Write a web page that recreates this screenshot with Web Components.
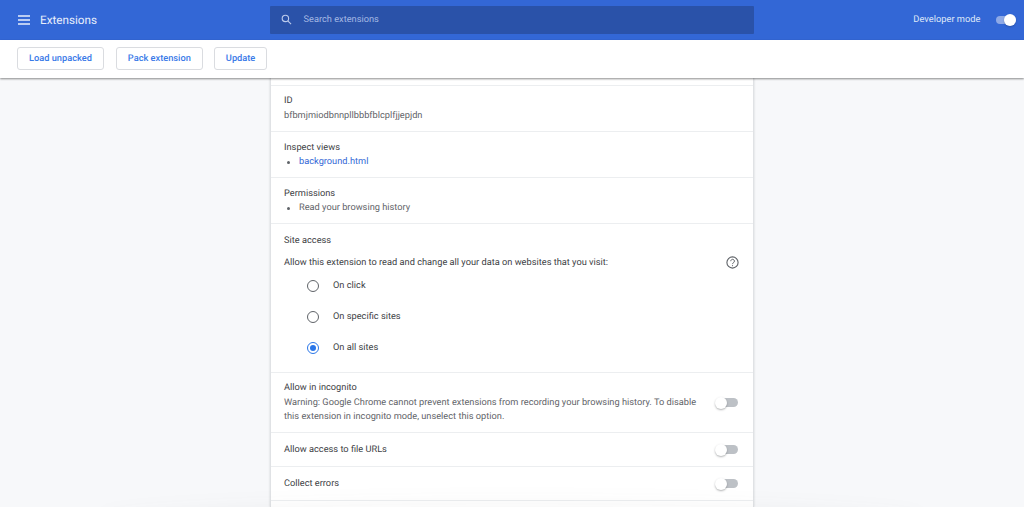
<!DOCTYPE html>
<html>
<head>
<meta charset="utf-8">
<title>Extensions</title>
<style>
  html, body { margin: 0; height: 507px; overflow: hidden; }
  body { background: #f7f8fa; font: 9.24px Roboto, sans-serif; text-rendering: geometricPrecision; color: #3c4043; display: flex; flex-direction: column; }
  /* faint shadow of the bottom edge, lies over the card */
  body::after { content: ""; position: fixed; left: 100px; right: 100px; bottom: -30px; height: 38px; border-radius: 50%; background: rgba(60,64,67,.03); filter: blur(8px); pointer-events: none; }
</style>
</head>
<body>
<ext-header></ext-header>
<ext-toolbar>
  <ext-button>Load unpacked</ext-button>
  <ext-button>Pack extension</ext-button>
  <ext-button>Update</ext-button>
</ext-toolbar>
<ext-card>
  <ext-row label="ID"><span class="muted">bfbmjmiodbnnpllbbbfblcplfjjepjdn</span></ext-row>
  <ext-row label="Inspect views"><ext-bullet><a>background.html</a></ext-bullet></ext-row>
  <ext-row label="Permissions"><ext-bullet>Read your browsing history</ext-bullet></ext-row>
  <ext-site-access></ext-site-access>
  <ext-toggle-row label="Allow in incognito" tall>Warning: Google Chrome cannot prevent extensions from recording your browsing history. To disable this extension in incognito mode, unselect this option.</ext-toggle-row>
  <ext-toggle-row label="Allow access to file URLs"></ext-toggle-row>
  <ext-toggle-row label="Collect errors"></ext-toggle-row>
</ext-card>

<script>
class ExtToggle extends HTMLElement {
  constructor() {
    super();
    this.attachShadow({ mode: "open" }).innerHTML = `
      <style>
        :host { display: block; position: relative; width: 22.5px; height: 12px; flex: none; }
        .bar { position: absolute; left: 2px; right: 0; top: 1.8px; height: 8.4px; border-radius: 5px; background: #bdc1c6; }
        .knob { position: absolute; left: 0; top: 0; width: 12px; height: 12px; border-radius: 50%; background: #fff; box-shadow: 0 1px 2px rgba(60,64,67,.4); }
        :host([on]) .bar { background: #8ea9e6; }
        :host([on]) .knob { left: auto; right: 0; box-shadow: 0 1px 2px rgba(0,0,0,.2); }
      </style>
      <div class="bar"></div><div class="knob"></div>`;
  }
}
customElements.define("ext-toggle", ExtToggle);

class ExtHeader extends HTMLElement {
  constructor() {
    super();
    this.attachShadow({ mode: "open" }).innerHTML = `
      <style>
        :host { display: grid; grid-template-columns: 270px 484px 1fr; height: 39.5px; background: #3367d6; color: #fff; align-items: center; flex: none; }
        .left { display: flex; align-items: center; gap: 10px; padding-left: 18px; font-size: 11.7px; color: #e8eefb; }
        svg { display: block; }
        .search { height: 28.5px; background: #2a52a9; display: flex; align-items: center; gap: 12px; padding-left: 10.5px; color: #a5b9e4; font-size: 9.24px; border-radius: 1px; }
        .right { display: flex; align-items: center; justify-content: flex-end; gap: 13px; padding-right: 8px; font-size: 9.3px; color: #dfe7f8; }
      </style>
      <div class="left">
        <svg width="12" height="10" viewBox="0 0 12 10"><path d="M0 1h12M0 5h12M0 9h12" stroke="#e8eefb" stroke-width="1.3"/></svg>
        <span>Extensions</span>
      </div>
      <div class="search">
        <svg width="11" height="11" viewBox="0 0 12 12" fill="none" stroke="#bccbec" stroke-width="1.2"><circle cx="4.8" cy="4.8" r="3.5"/><path d="M7.4 7.4 11 11"/></svg>
        <span>Search extensions</span>
      </div>
      <div class="right"><span>Developer mode</span><ext-toggle on></ext-toggle></div>`;
  }
}
customElements.define("ext-header", ExtHeader);

class ExtToolbar extends HTMLElement {
  constructor() {
    super();
    this.attachShadow({ mode: "open" }).innerHTML = `
      <style>
        :host { display: flex; gap: 12px; align-items: center; height: 38.5px; padding-left: 17px; background: #fff; box-shadow: 0 1px 2px rgba(0,0,0,.45); flex: none; position: relative; z-index: 1; }
        ::slotted(:last-child) { margin-left: -1px; }
      </style>
      <slot></slot>`;
  }
}
customElements.define("ext-toolbar", ExtToolbar);

class ExtButton extends HTMLElement {
  constructor() {
    super();
    this.attachShadow({ mode: "open" }).innerHTML = `
      <style>
        :host { display: flex; align-items: center; height: 23px; box-sizing: border-box; padding: 0 11px; border: 1px solid #dadce0; border-radius: 3px; color: #3a7ae8; font-weight: 500; }
      </style>
      <slot></slot>`;
  }
}
customElements.define("ext-button", ExtButton);

class ExtCard extends HTMLElement {
  constructor() {
    super();
    this.attachShadow({ mode: "open" }).innerHTML = `
      <style>
        :host { display: block; box-sizing: border-box; width: 484px; margin-left: 270px; padding-top: 7px; flex: 1; min-height: 0; background: #fff; border: solid #e0e2e5; border-width: 0 1px; box-shadow: 0 0 2px rgba(60,64,67,.2); }
        .top { border-top: 1px solid #eceef0; }
      </style>
      <div class="top"><slot></slot></div>`;
  }
}
customElements.define("ext-card", ExtCard);

class ExtRow extends HTMLElement {
  constructor() {
    super();
    const label = this.getAttribute("label");
    this.attachShadow({ mode: "open" }).innerHTML = `
      <style>
        :host { display: block; height: 46px; box-sizing: border-box; padding: 8px 13px 0; border-bottom: 1px solid #eceef0; line-height: 14px; }
        :host(:not(:first-child)) { padding-top: 8.5px; }
        .label { height: 14.5px; }
        ::slotted(.muted) { color: #5f6368; }
      </style>
      <div class="label">${label}</div>
      <slot></slot>`;
  }
}
customElements.define("ext-row", ExtRow);

class ExtBullet extends HTMLElement {
  constructor() {
    super();
    this.attachShadow({ mode: "open" }).innerHTML = `
      <style>
        :host { display: block; position: relative; padding-left: 15px; color: #5f6368; }
        :host::before { content: ""; position: absolute; left: 3px; top: 5.5px; width: 3px; height: 3px; border-radius: 50%; background: #5f6368; }
        ::slotted(a) { color: #3367d6; }
      </style>
      <slot></slot>`;
  }
}
customElements.define("ext-bullet", ExtBullet);

class ExtRadio extends HTMLElement {
  constructor() {
    super();
    this.attachShadow({ mode: "open" }).innerHTML = `
      <style>
        :host { display: flex; align-items: center; gap: 14px; height: 31.3px; padding-left: 23px; color: #3c4043; }
        .dot { box-sizing: border-box; width: 12px; height: 12px; border: 1.5px solid #5f6368; border-radius: 50%; display: flex; align-items: center; justify-content: center; flex: none; }
        :host([checked]) .dot { border-color: #2a76e8; }
        :host([checked]) .dot::after { content: ""; width: 6px; height: 6px; border-radius: 50%; background: #2a76e8; }
      </style>
      <span class="dot"></span><slot></slot>`;
  }
}
customElements.define("ext-radio", ExtRadio);

class ExtSiteAccess extends HTMLElement {
  constructor() {
    super();
    this.attachShadow({ mode: "open" }).innerHTML = `
      <style>
        :host { display: block; height: 149px; box-sizing: border-box; padding: 9.5px 14px 0 13px; border-bottom: 1px solid #eceef0; line-height: 14px; }
        .line { display: flex; justify-content: space-between; align-items: center; margin: 8px 0 0; }
        svg { display: block; }
        .opts { margin-top: .5px; }
      </style>
      <div>Site access</div>
      <div class="line">
        <span>Allow this extension to read and change all your data on websites that you visit:</span>
        <svg width="13" height="13" viewBox="0 0 13 13" fill="none" stroke="#5f6368"><circle cx="6.5" cy="6.5" r="5.6" stroke-width="1.1"/><path d="M4.8 5.2a1.8 1.8 0 1 1 2.8 1.4c-.7.5-1.1.8-1.1 1.5" stroke-width="1"/><path d="M6.5 9.2v1" stroke-width="1.1"/></svg>
      </div>
      <div class="opts">
        <ext-radio>On click</ext-radio>
        <ext-radio>On specific sites</ext-radio>
        <ext-radio checked>On all sites</ext-radio>
      </div>`;
  }
}
customElements.define("ext-site-access", ExtSiteAccess);

class ExtToggleRow extends HTMLElement {
  constructor() {
    super();
    const label = this.getAttribute("label");
    this.attachShadow({ mode: "open" }).innerHTML = `
      <style>
        :host { display: flex; align-items: center; justify-content: space-between; height: 34px; box-sizing: border-box; padding: 0 15.5px 0 13px; border-bottom: 1px solid #eceef0; line-height: 14px; }
        :host([tall]) { height: 60px; line-height: 14.5px; }
        .text { padding-top: 1px; }
        .sub { color: #5f6368; width: 415px; }
      </style>
      <div class="text">
        <div>${label}</div>
        <div class="sub"><slot></slot></div>
      </div>
      <ext-toggle></ext-toggle>`;
  }
}
customElements.define("ext-toggle-row", ExtToggleRow);
</script>
</body>
</html>
